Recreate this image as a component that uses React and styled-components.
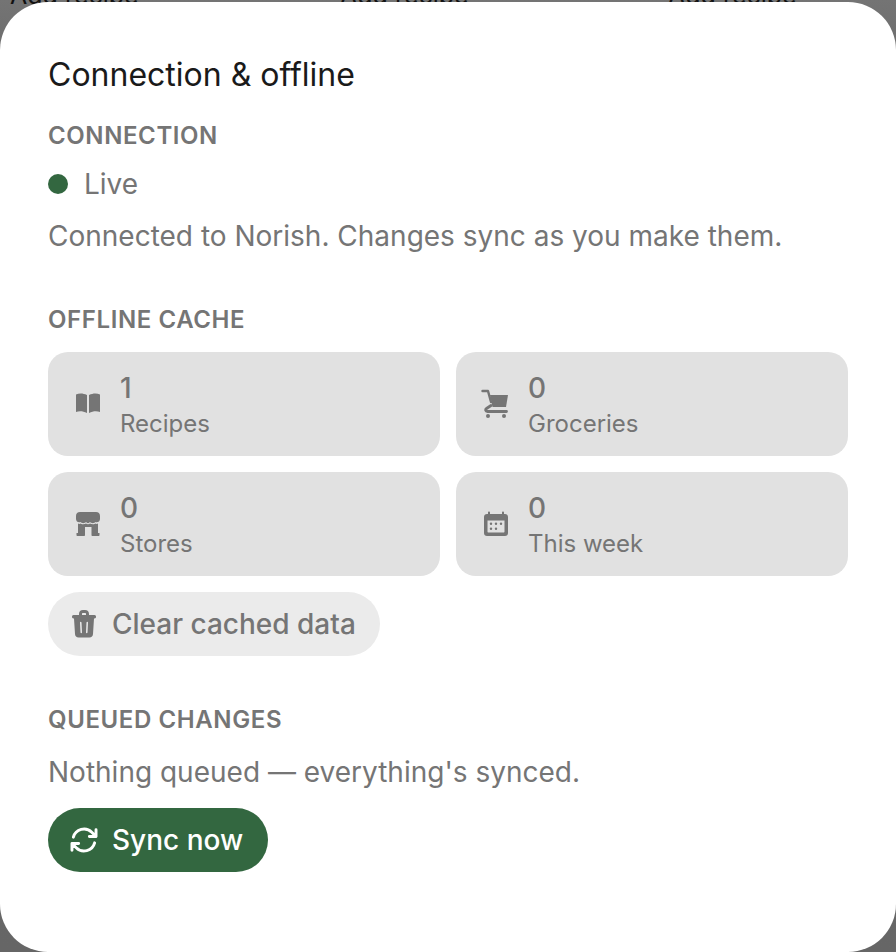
import React from 'react';
import styled, { createGlobalStyle } from 'styled-components';
import { HiOutlineArrowPath } from 'react-icons/hi2';

const GlobalStyle = createGlobalStyle`
  html, body {
    margin: 0;
    height: 100%;
    background: #6b6b6b;
    font-family: Inter, "Liberation Sans", sans-serif;
  }
`;

const Backdrop = styled.div`
  position: relative;
  width: 896px;
  height: 952px;
  overflow: hidden;
  background: linear-gradient(#747474, #6c6c6c 60px, #666);
`;

const BehindLabel = styled.span`
  position: absolute;
  left: ${(p) => p.$left}px;
  top: -20px;
  font-size: 25px;
  line-height: 30px;
  color: #111;
  white-space: nowrap;
`;

const Sheet = styled.div`
  position: absolute;
  left: 0;
  right: 0;
  top: 2px;
  bottom: 0;
  box-sizing: border-box;
  padding: 54px 48px 0;
  background: #fff;
  border-radius: 48px;
`;

const Title = styled.h2`
  margin: 0 0 26px;
  font-size: 32px;
  line-height: 38px;
  font-weight: 400;
  color: #1a1a1a;
`;

const SectionLabel = styled.div`
  font-size: 24px;
  line-height: 32px;
  font-weight: 600;
  letter-spacing: 0.6px;
  color: #757575;
`;

const StatusRow = styled.div`
  display: flex;
  align-items: center;
  gap: 16px;
  height: 40px;
  margin-top: 12px;
  font-size: 28px;
  color: #757575;
`;

const Dot = styled.span`
  width: 20px;
  height: 20px;
  border-radius: 50%;
  background: #336740;
`;

const Body = styled.p`
  margin: ${(p) => p.$top}px 0 0;
  font-size: 28px;
  line-height: 40px;
  color: #757575;
`;

const Section = styled.section`
  margin-top: 48px;
`;

const CacheGrid = styled.div`
  display: grid;
  grid-template-columns: 1fr 1fr;
  gap: 16px;
  margin-top: 16px;
`;

const CacheCard = styled.div`
  display: flex;
  align-items: center;
  gap: 16px;
  height: 104px;
  padding: 0 24px;
  box-sizing: border-box;
  background: #e1e1e1;
  border-radius: 20px;
  color: #757575;
`;

const CardText = styled.div`
  display: flex;
  flex-direction: column;
  padding-top: 4px;
`;

const CardCount = styled.span`
  font-size: 28px;
  line-height: 36px;
  font-weight: 500;
`;

const CardLabel = styled.span`
  font-size: 24px;
  line-height: 36px;
`;

const PillButton = styled.button`
  display: inline-flex;
  align-items: center;
  gap: 12px;
  height: 64px;
  padding: 0 ${(p) => (p.$primary ? 25 : 24)}px 0 20px;
  border: 0;
  border-radius: 32px;
  background: ${(p) => (p.$primary ? '#336740' : '#ebebeb')};
  color: ${(p) => (p.$primary ? '#fff' : '#757575')};
  font-family: inherit;
  font-size: 28px;
  font-weight: 500;
`;

const ButtonRow = styled.div`
  margin-top: 16px;
`;

const Glyph = styled.svg.attrs({ viewBox: '0 0 32 32', fill: 'currentColor' })`
  flex: none;
  width: 32px;
  height: 32px;
`;

const SyncIcon = styled(HiOutlineArrowPath)`
  flex: none;
  width: 32px;
  height: 32px;
  stroke-width: 2.2;
`;

const BookIcon = () => (
  <Glyph>
    <path d="M4 6.500C7 5 11 5 15 7V25C11 23 7 23 4 24Z" />
    <path d="M28 6.500C25 5 21 5 17 7V25C21 23 25 23 28 24Z" />
  </Glyph>
);

const CartIcon = () => (
  <Glyph>
    <path d="M2.500 3H8L11 14" fill="none" stroke="currentColor" strokeWidth="2.400" strokeLinecap="round" strokeLinejoin="round" />
    <path d="M10 7H28L26 19H12.500Z" />
    <path d="M26.500 23.500H7.500C5.500 23.500 5 21.500 6.500 20.500L11 17.500" fill="none" stroke="currentColor" strokeWidth="2.800" strokeLinecap="round" strokeLinejoin="round" />
    <circle cx="8" cy="28" r="2" />
    <circle cx="24" cy="28" r="2" />
  </Glyph>
);

const StoreIcon = () => (
  <Glyph>
    <path d="M8 4H24C26.500 4 28 5.500 28 8V11C28 13.500 25.500 15 23.500 14C22.500 15.500 19 15.500 18 14C17 15.500 15 15.500 14 14C13 15.500 9.500 15.500 8.500 14C6.500 15 4 13.500 4 11V8C4 5.500 5.500 4 8 4Z" />
    <path d="M6 15.500C7 16 8 16 8.500 15.500C9.500 16.500 12.500 16.500 14 15.500C15 16.500 17 16.500 18 15.500C19.500 16.500 22.500 16.500 23.500 15.500C24 16 25 16 26 15.500V25H27.500V27C27.500 27.600 27.100 28 26.500 28H20.500C19.900 28 19.500 27.600 19.500 27V19H13V27C13 27.600 12.600 28 12 28H5.500C4.900 28 4.500 27.600 4.500 27V25H6Z" />
  </Glyph>
);

const CalendarIcon = () => (
  <Glyph>
    <path fillRule="evenodd" d="M8 4.500C8 3.100 10 3.100 10 4.500V6H22V4.500C22 3.100 24 3.100 24 4.500V6H25C26.800 6 28 7.200 28 9V25C28 26.800 26.800 28 25 28H7C5.200 28 4 26.800 4 25V9C4 7.200 5.200 6 7 6H8ZM7.500 12.500V23.500C7.500 24.200 7.800 24.500 8.500 24.500H23.500C24.200 24.500 24.500 24.200 24.500 23.500V12.500Z" />
    <circle cx="11" cy="15.700" r="1.200" />
    <circle cx="16" cy="15.700" r="1.200" />
    <circle cx="21" cy="15.700" r="1.200" />
    <circle cx="11" cy="20.700" r="1.200" />
    <circle cx="16" cy="20.700" r="1.200" />
  </Glyph>
);

const TrashIcon = () => (
  <Glyph>
    <path fillRule="evenodd" d="M11 7V6C11 3.500 12.500 2 15 2H17C19.500 2 21 3.500 21 6V7H26.500C28.500 7 28.500 10.500 26.500 10.500H26L25 26C24.900 28 23.500 29.500 21.500 29.500H10.500C8.500 29.500 7.100 28 7 26L6 10.500H5.500C3.500 10.500 3.500 7 5.500 7ZM14 7H18V6C18 5.300 17.700 5 17 5H15C14.300 5 14 5.300 14 6ZM12 14.500L12.500 24.500C12.600 25.500 14 25.500 14 24.500L13.500 14.500C13.400 13.500 12 13.500 12 14.500ZM18.500 14.500L18 24.500C18 25.500 19.400 25.500 19.500 24.500L20 14.500C20 13.500 18.600 13.500 18.500 14.500Z" />
  </Glyph>
);

const cacheItems = [
  { icon: <BookIcon />, count: 1, label: 'Recipes' },
  { icon: <CartIcon />, count: 0, label: 'Groceries' },
  { icon: <StoreIcon />, count: 0, label: 'Stores' },
  { icon: <CalendarIcon />, count: 0, label: 'This week' },
];

export default function App() {
  return (
    <>
      <GlobalStyle />
      <Backdrop>
        <BehindLabel $left={10}>Add recipe</BehindLabel>
        <BehindLabel $left={340}>Add recipe</BehindLabel>
        <BehindLabel $left={668}>Add recipe</BehindLabel>
        <Sheet>
          <Title>Connection &amp; offline</Title>
          <SectionLabel>CONNECTION</SectionLabel>
          <StatusRow>
            <Dot />
            Live
          </StatusRow>
          <Body $top={12}>Connected to Norish. Changes sync as you make them.</Body>
          <Section>
            <SectionLabel>OFFLINE CACHE</SectionLabel>
            <CacheGrid>
              {cacheItems.map((item) => (
                <CacheCard key={item.label}>
                  {item.icon}
                  <CardText>
                    <CardCount>{item.count}</CardCount>
                    <CardLabel>{item.label}</CardLabel>
                  </CardText>
                </CacheCard>
              ))}
            </CacheGrid>
            <ButtonRow>
              <PillButton>
                <TrashIcon />
                Clear cached data
              </PillButton>
            </ButtonRow>
          </Section>
          <Section>
            <SectionLabel>QUEUED CHANGES</SectionLabel>
            <Body $top={16}>Nothing queued — everything's synced.</Body>
            <ButtonRow>
              <PillButton $primary>
                <SyncIcon />
                Sync now
              </PillButton>
            </ButtonRow>
          </Section>
        </Sheet>
      </Backdrop>
    </>
  );
}
